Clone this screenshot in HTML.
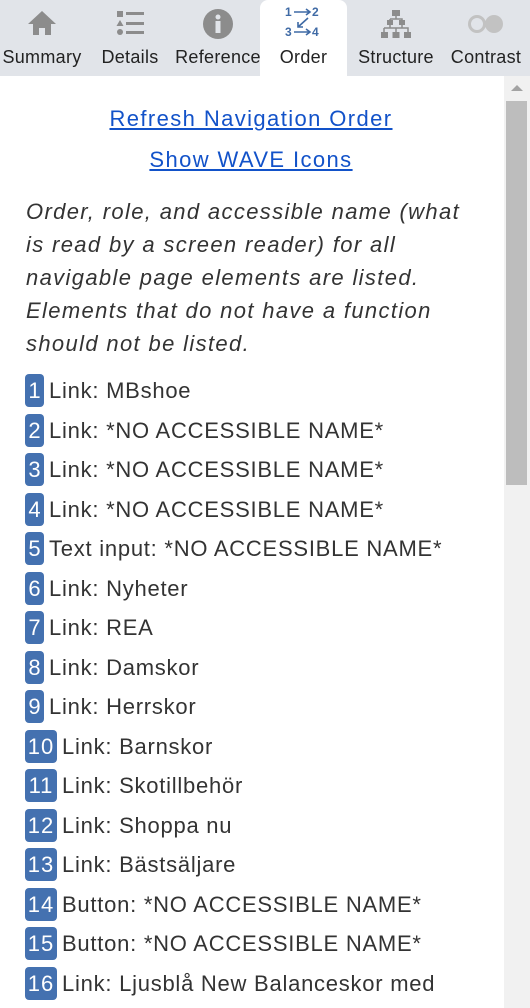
<!DOCTYPE html>
<html><head><meta charset="utf-8"><style>
*{margin:0;padding:0;box-sizing:border-box}
body{width:530px;height:1008px;overflow:hidden;background:#fff;font-family:"Liberation Sans",sans-serif;color:#333;position:relative}
.tabs{position:absolute;left:0;top:0;width:530px;height:76px;background:#e1e4e9}
.tab{position:absolute;top:0;height:76px;text-align:center;font-size:18px;color:#222;letter-spacing:0.3px}
.tab .lbl{position:absolute;left:0;right:0;top:47px;white-space:nowrap}
.tab svg{position:absolute;top:8px;left:50%;transform:translateX(-50%)}
.active{background:#fff;border-radius:8px 8px 0 0}
.sb{position:absolute;left:504px;top:76px;width:26px;height:932px;background:#f1f1f1}
.thumb{position:absolute;left:2px;top:25px;width:21px;height:384px;background:#bdbdbd}
.arrow{position:absolute;left:7px;top:9px;width:0;height:0;border-left:6px solid transparent;border-right:6px solid transparent;border-bottom:6px solid #a3a3a3}
a{color:#1252c9;text-decoration:underline}
.lk{position:absolute;left:0;width:502px;text-align:center;font-size:22px;white-space:nowrap;letter-spacing:1.4px}
.p{position:absolute;left:26px;top:195px;font-size:22px;font-style:italic;line-height:33px;white-space:nowrap;color:#333;letter-spacing:1.35px}
.row{position:absolute;left:25px;font-size:22px;white-space:nowrap;height:33px;line-height:33px;letter-spacing:0.75px}
.b{display:inline-block;background:#4471b0;color:#fff;border-radius:4px;height:33px;line-height:33px;text-align:center;min-width:19px;padding:0 1px;margin-right:5px;vertical-align:top;letter-spacing:0}
.b2{width:32px;letter-spacing:1px}
</style></head><body>
<div class="tabs">
 <div class="tab" style="left:0;width:84px"><svg width="32" height="30" viewBox="0 0 32 30"><path d="M16 3 L2 16 H7 V27 H13 V20 H19 V27 H25 V16 H30 Z" fill="#8c8c8c"/></svg><div class="lbl">Summary</div></div>
 <div class="tab" style="left:86px;width:88px"><svg width="32" height="30" viewBox="0 0 32 30"><rect x="3" y="3" width="6" height="6" fill="#8c8c8c"/><path d="M6 12 L9.5 18 H2.5Z" fill="#8c8c8c"/><circle cx="6" cy="24" r="3" fill="#8c8c8c"/><rect x="12" y="4" width="18" height="3" fill="#8c8c8c"/><rect x="12" y="14" width="18" height="3" fill="#8c8c8c"/><rect x="12" y="23" width="18" height="3" fill="#8c8c8c"/></svg><div class="lbl">Details</div></div>
 <div class="tab" style="left:174px;width:88px"><svg width="32" height="32" viewBox="0 0 32 32"><circle cx="16" cy="16" r="15" fill="#8c8c8c"/><circle cx="16" cy="9" r="2.5" fill="#e1e4e9"/><rect x="13.5" y="13" width="5" height="12" fill="#e1e4e9"/></svg><div class="lbl">Reference</div></div>
 <div class="tab active" style="left:260px;width:87px"><svg width="40" height="34" viewBox="0 0 40 34" style="top:5px"><g fill="#3f6aa5" font-family="Liberation Sans" font-weight="bold" font-size="12"><text x="1" y="11">1</text><text x="28" y="11">2</text><text x="1" y="31">3</text><text x="28" y="31">4</text></g><g stroke="#3f6aa5" stroke-width="1.6" fill="none"><path d="M10 7 H26 M22 4 L26 7 L22 10"/><path d="M10 27 H26 M22 24 L26 27 L22 30"/><path d="M24 13 L14 22 M14 17 V22 H19"/></g></svg><div class="lbl">Order</div></div>
 <div class="tab" style="left:350px;width:92px"><svg width="34" height="32" viewBox="0 0 34 32"><g fill="#8c8c8c"><rect x="13" y="2" width="8" height="6"/><rect x="8" y="12" width="6" height="5"/><rect x="20" y="12" width="6" height="5"/><rect x="2" y="24" width="7" height="6"/><rect x="13.5" y="24" width="7" height="6"/><rect x="25" y="24" width="7" height="6"/></g><path d="M17 8 V11 M11 11 H23 V12 M11 11 V12 M11 17 V20 M5 20 H29 V24 M5 20 V24 M17 20 V24 M23 17 V20" stroke="#8c8c8c" stroke-width="1.5" fill="none"/></svg><div class="lbl">Structure</div></div>
 <div class="tab" style="left:442px;width:88px"><svg width="40" height="30" viewBox="0 0 40 30"><circle cx="11" cy="16" r="7.5" fill="none" stroke="#c2c2c2" stroke-width="3"/><circle cx="28" cy="16" r="9" fill="#c2c2c2"/></svg><div class="lbl">Contrast</div></div>
</div>
<div class="lk" style="top:106px"><a>Refresh Navigation Order</a></div>
<div class="lk" style="top:147px"><a>Show WAVE Icons</a></div>
<div class="p">Order, role, and accessible name (what<br>is read by a screen reader) for all<br>navigable page elements are listed.<br>Elements that do not have a function<br>should not be listed.</div>
<div class="row" style="top:374px"><span class="b">1</span>Link: MBshoe</div>
<div class="row" style="top:414px"><span class="b">2</span>Link: *NO ACCESSIBLE NAME*</div>
<div class="row" style="top:453px"><span class="b">3</span>Link: *NO ACCESSIBLE NAME*</div>
<div class="row" style="top:493px"><span class="b">4</span>Link: *NO ACCESSIBLE NAME*</div>
<div class="row" style="top:532px"><span class="b">5</span>Text input: *NO ACCESSIBLE NAME*</div>
<div class="row" style="top:572px"><span class="b">6</span>Link: Nyheter</div>
<div class="row" style="top:611px"><span class="b">7</span>Link: REA</div>
<div class="row" style="top:651px"><span class="b">8</span>Link: Damskor</div>
<div class="row" style="top:690px"><span class="b">9</span>Link: Herrskor</div>
<div class="row" style="top:730px"><span class="b b2">10</span>Link: Barnskor</div>
<div class="row" style="top:769px"><span class="b b2">11</span>Link: Skotillbehör</div>
<div class="row" style="top:809px"><span class="b b2">12</span>Link: Shoppa nu</div>
<div class="row" style="top:848px"><span class="b b2">13</span>Link: Bästsäljare</div>
<div class="row" style="top:888px"><span class="b b2">14</span>Button: *NO ACCESSIBLE NAME*</div>
<div class="row" style="top:927px"><span class="b b2">15</span>Button: *NO ACCESSIBLE NAME*</div>
<div class="row" style="top:967px"><span class="b b2">16</span>Link: Ljusblå New Balanceskor med</div>
<div class="sb"><div class="arrow"></div><div class="thumb"></div></div>
</body></html>
